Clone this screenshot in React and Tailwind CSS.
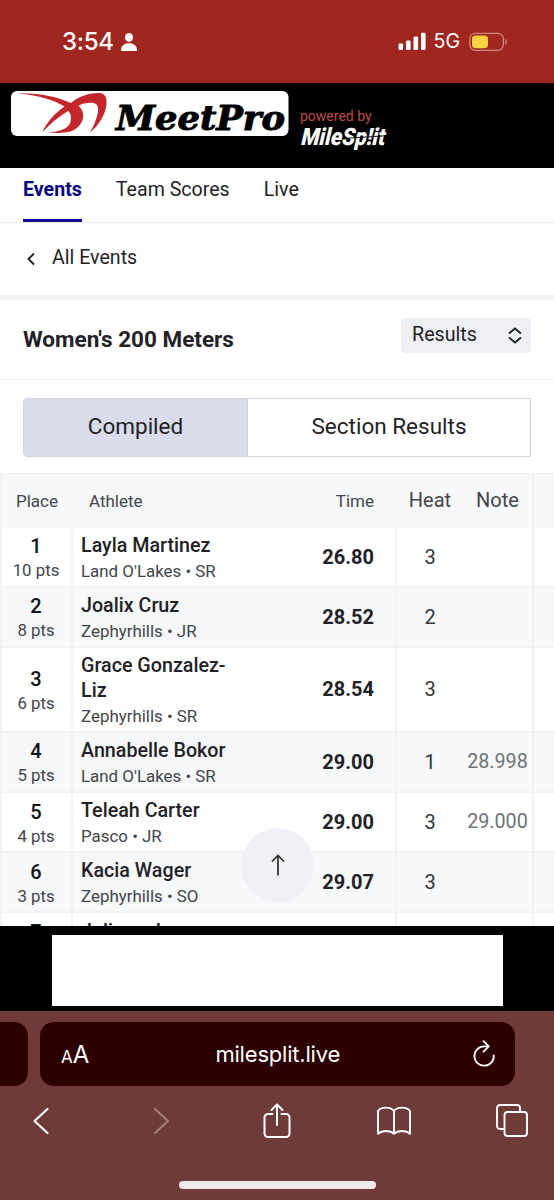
import { clsx } from 'clsx'

const TABS = ['Events', 'Team Scores', 'Live']

const RESULTS = [
  { place: 1, pts: 10, name: ['Layla Martinez'], team: "Land O'Lakes", year: 'SR', time: '26.80', heat: 3 },
  { place: 2, pts: 8, name: ['Joalix Cruz'], team: 'Zephyrhills', year: 'JR', time: '28.52', heat: 2 },
  { place: 3, pts: 6, name: ['Grace Gonzalez-', 'Liz'], team: 'Zephyrhills', year: 'SR', time: '28.54', heat: 3 },
  { place: 4, pts: 5, name: ['Annabelle Bokor'], team: "Land O'Lakes", year: 'SR', time: '29.00', heat: 1, note: '28.998' },
  { place: 5, pts: 4, name: ['Teleah Carter'], team: 'Pasco', year: 'JR', time: '29.00', heat: 3, note: '29.000' },
  { place: 6, pts: 3, name: ['Kacia Wager'], team: 'Zephyrhills', year: 'SO', time: '29.07', heat: 3 },
  { place: 7, name: ['Juliana Jones'] },
]

export default function App() {
  return (
    <div className="w-[554px] h-[1200px] overflow-hidden flex flex-col bg-white font-[Roboto,sans-serif] text-[#1f2226]">
      <StatusBar />
      <SiteHeader />
      <Tabs />

      <div className="h-[72px] shrink-0 flex items-center pl-[25px]">
        <svg width="12" height="14" viewBox="0 0 12 14" fill="none" stroke="currentColor" strokeWidth="1.9">
          <path d="M9 1.5 3.5 7 9 12.5" />
        </svg>
        <span className="ml-[15px] pb-0.5 text-[19.6px]">All Events</span>
      </div>

      <div className="h-[85px] shrink-0 border-t-[5px] border-b border-t-[#f3f3f4] border-b-[#f1f1f2] flex justify-between items-center px-[23px]">
        <h1 className="text-[22.5px] font-bold">Women's 200 Meters</h1>
        <div className="w-[130px] h-[35px] mb-2 rounded bg-[#eff0f6] flex items-center justify-between pl-[11px] pr-[9px]">
          <span className="text-[19.7px] pb-0.5">Results</span>
          <svg width="14" height="17" viewBox="0 0 14 17" fill="none" stroke="currentColor" strokeWidth="1.9">
            <path d="M1 6.5 7 1.5l6 5M1 10.5l6 5 6-5" />
          </svg>
        </div>
      </div>

      <div className="shrink-0 px-[23px] pt-[18px] pb-4">
        <div className="h-[59px] flex border border-[#d3d4dd] rounded-l text-[22.5px] overflow-hidden">
          <div className="w-[224px] bg-[#dadceb] border-r border-[#d3d4dd] flex items-center justify-center pb-0.5">Compiled</div>
          <div className="flex-1 flex items-center justify-center pb-0.5">Section Results</div>
        </div>
      </div>

      <ResultsTable />
      <AdBanner />
      <BrowserBar />
    </div>
  )
}

function StatusBar() {
  return (
    <div className="h-[83px] shrink-0 bg-[#9f271f] flex items-center justify-between pl-[62px] pr-[46px] text-white font-[Inter,sans-serif]">
      <div className="flex items-center gap-[7px]">
        <span className="text-[24px] font-medium tracking-[-0.3px] leading-none">3:54</span>
        <svg width="16" height="18" viewBox="0 0 16 18" fill="currentColor">
          <ellipse cx="8" cy="4.4" rx="4" ry="4.4" />
          <path d="M0 17C0 12.5 3.5 10.2 8 10.2s8 2.3 8 6.8c0 .6-.4 1-1 1H1c-.6 0-1-.4-1-1z" />
        </svg>
      </div>
      <div className="flex items-center">
        <svg width="28" height="19" viewBox="0 0 28 19" fill="currentColor">
          <rect x="0.5" y="11.5" width="4.6" height="6.5" rx="1.3" />
          <rect x="8" y="8.5" width="4.6" height="9.5" rx="1.3" />
          <rect x="15.5" y="4.5" width="4.6" height="13.5" rx="1.3" />
          <rect x="23" y="0.7" width="4.6" height="17.3" rx="1.3" />
        </svg>
        <span className="ml-[8px] text-[19.5px] leading-none">5G</span>
        <svg className="ml-[9px]" width="39" height="20" viewBox="0 0 39 20" fill="none">
          <rect x="0.8" y="1.3" width="33.6" height="17" rx="5.5" stroke="#cf8580" strokeWidth="1.3" />
          <rect x="3" y="3.4" width="16" height="12.8" rx="3.6" fill="#fad343" />
          <path d="M36.4 6.7c2 .9 2 5.3 0 6.2z" fill="#cf8580" />
        </svg>
      </div>
    </div>
  )
}

function SiteHeader() {
  return (
    <header className="h-[84.5px] shrink-0 bg-black flex pl-[11px] pt-2">
      <svg width="278" height="45" viewBox="0 0 278 45">
        <rect width="277.5" height="45" rx="6" fill="#fff" />
        <path fill="#c3272b" d="M6 2.2C28 1.6 46 5.5 60 12C68 5 78 2 88 2C94 2 96 6 95.5 13C94.5 24 88 34 79 41.500C84 32 87.500 24 87 17C86.500 12 82 10.500 73 12.500C70 13.200 68.500 14 67.500 15C74 20 73.500 29 68 35C62 42 52 42.500 36.500 41.500C49 40.500 57 38 59.500 31C60.500 26 60 22.500 57 20C47 26 39 33 31.500 41C35 32 44 22 53.500 15.500C45 10 30 4.500 6 2.200Z" />
        <text x="105" y="39" textLength="169" lengthAdjust="spacingAndGlyphs" fontFamily="DejaVu Serif" fontWeight="700" fontStyle="italic" fontSize="33.5" stroke="#000" strokeWidth="1">MeetPro</text>
      </svg>
      <div className="ml-[11px] pt-[17px] flex flex-col">
        <span className="text-[14px] leading-[17px] text-[#bf4b4b]">powered by</span>
        <svg width="94" height="30" viewBox="0 0 94 30" fill="#fff">
          <g transform="skewX(-13)">
            <text x="4.5" y="19.8" textLength="84" lengthAdjust="spacingAndGlyphs" fontFamily="Roboto" fontWeight="900" fontSize="24">MileSp!it</text>
          </g>
          <path d="M42 13.5 90 10.500" stroke="#000" strokeWidth="0.9" />
        </svg>
      </div>
    </header>
  )
}

function Tabs() {
  return (
    <nav className="h-[55.5px] shrink-0 border-b border-[#ececef] flex gap-[34px] pl-[23px] text-[19.6px]">
      {TABS.map((tab, i) => (
        <div
          key={tab}
          className={clsx('h-[54px] leading-[43px] border-b-[3px]', i === 0 ? 'font-bold text-[#06067f] border-[#0d0d92]' : 'border-transparent')}
        >
          {tab}
        </div>
      ))}
    </nav>
  )
}

const COLS = 'grid grid-cols-[72px_324px_66px_69px_1fr]'

function ResultsTable() {
  return (
    <div className="relative flex-1 min-h-0 overflow-hidden border-l-2 border-[#f1f2f4]">
      <div className={clsx(COLS, 'h-[54.5px] bg-[#f7f8fa] border-t border-[#f1f2f4] items-center text-[#42454b] -ml-px')}>
        <span className="text-[17px] text-center pt-px">Place</span>
        <span className="flex justify-between pl-4 pr-[23px] text-[17px] pt-px">
          <span>Athlete</span>
          <span>Time</span>
        </span>
        <span className="text-[20px] text-center pb-0.5">Heat</span>
        <span className="text-[20px] text-center pb-0.5">Note</span>
        <span className="h-full border-l-2 border-[#f1f2f4]" />
      </div>
      {RESULTS.map((r) => (
        <ResultRow key={r.place} result={r} />
      ))}

      {/* back to top */}
      <button className="absolute left-[239px] top-[355px] w-[73px] h-[74px] rounded-full bg-[#eff0f7]/95 flex items-center justify-center">
        <svg width="14" height="22" viewBox="0 0 14 22" fill="none" stroke="#2a2c31" strokeWidth="1.7">
          <path d="M7 21.5V1.5M1 7.5l6-6 6 6" />
        </svg>
      </button>
    </div>
  )
}

function ResultRow({ result: r }) {
  return (
    <div
      className={clsx(
        COLS,
        '-ml-px border-b-2 border-[#f1f2f4]',
        r.name.length > 1 ? 'h-[85px]' : 'h-[60.2px]',
        r.place % 2 === 0 ? 'bg-[#f7f8fa]' : 'bg-white'
      )}
    >
      <div className="pt-[3px] flex flex-col justify-center text-center border-r-2 border-[#f1f2f4]">
        <p className="text-[20px] leading-[25px] font-medium text-[#111317]">{r.place}</p>
        <p className="h-[23px] text-[16.8px] leading-[23px] text-[#42454b]">{r.pts && `${r.pts} pts`}</p>
      </div>
      <div className="flex justify-between items-center pl-2 pr-[21px] border-r-2 border-[#f1f2f4]">
        <div className="pt-[3px]">
          <p className="text-[19.7px] leading-[25px] font-medium">
            {r.name.map((part) => (
              <span key={part} className="block">{part}</span>
            ))}
          </p>
          <p className="h-[26px] text-[16.9px] leading-[26px] text-[#42454b]">{r.team && `${r.team} • ${r.year}`}</p>
        </div>
        <span className="text-[20px] font-bold">{r.time}</span>
      </div>
      <div className="flex items-center justify-center text-[20px] text-[#33363b]">{r.heat}</div>
      <div className="flex items-center justify-center text-[19.7px] text-[#707276]">{r.note}</div>
      <div className="border-l-2 border-[#f1f2f4]" />
    </div>
  )
}

function AdBanner() {
  return (
    <div className="h-[84.5px] shrink-0 bg-black flex justify-center pt-[9px]">
      <div className="w-[451px] h-[70.5px] bg-white" />
    </div>
  )
}

function BrowserBar() {
  return (
    <footer className="h-[189.5px] shrink-0 bg-[#6f3b39] text-white flex flex-col items-center font-[Inter,sans-serif]">
      <div className="w-full flex gap-3 pt-[11.5px]">
        <div className="w-7 h-[63.5px] rounded-r-[14px] bg-[#2d0000]" />
        <div className="w-[474.5px] h-[63.5px] rounded-[14px] bg-[#2d0000] flex items-center justify-between pl-[21px] pr-5">
          <span className="w-8 whitespace-nowrap leading-none pt-0.5">
            <span className="text-[17px]">A</span>
            <span className="text-[24px]">A</span>
          </span>
          <span className="text-[22px] tracking-[-0.2px] pt-px">milesplit.live</span>
          <span className="w-8 flex justify-end">
            <svg width="22" height="27" viewBox="0 0 22 27" fill="none" stroke="currentColor" strokeWidth="1.8" strokeLinecap="round" strokeLinejoin="round">
              <path d="M15 6.3H11A9.7 9.7 0 1 0 20.8 15.500" />
              <path d="M10.5 1.2 15.8 6.3 10.5 11.600" />
            </svg>
          </span>
        </div>
      </div>

      <div className="w-full h-[70px] flex items-center justify-between pl-[23px] pr-[24px]">
        <div className="w-9 flex justify-center">
          <svg width="18" height="28" viewBox="0 0 18 28" fill="none" stroke="currentColor" strokeWidth="2.2" strokeLinecap="round" strokeLinejoin="round">
            <path d="M15.500 2 2.500 14 15.500 26" />
          </svg>
        </div>
        <div className="w-9 flex justify-end pr-[7px]">
          <svg width="18" height="28" viewBox="0 0 18 28" fill="none" stroke="#a67f7d" strokeWidth="2" strokeLinecap="round" strokeLinejoin="round">
            <path d="M3 2 16 14 3 26" />
          </svg>
        </div>
        <div className="w-9 flex justify-center">
          <svg width="28" height="36" viewBox="0 0 28 36" fill="none" stroke="currentColor" strokeWidth="2" strokeLinecap="round" strokeLinejoin="round">
            <path d="M9.5 11H5a3.5 3.5 0 0 0-3.5 3.5v16A3.5 3.5 0 0 0 5 34h18a3.5 3.5 0 0 0 3.500-3.500v-16A3.500 3.500 0 0 0 23 11h-4.500M14 22V1.8M8.500 7 14 1.500 19.500 7" />
          </svg>
        </div>
        <div className="w-9 flex justify-center">
          <svg width="34" height="30" viewBox="0 0 34 30" fill="none" stroke="currentColor" strokeWidth="1.9" strokeLinejoin="round" strokeLinecap="round">
            <path d="M17 5C14 .7 4.500.3 1 5v22.800c4-3.800 12-3.800 16 0 4-3.800 12-3.800 16 0V5c-3.500-4.700-13-4.300-16 0zM17 5v22.800" />
          </svg>
        </div>
        <div className="w-9 flex justify-center">
          <svg width="32" height="33" viewBox="0 0 32 33" fill="none" stroke="currentColor" strokeWidth="1.9" strokeLinejoin="round">
            <path d="M8.500 25H4a3 3 0 0 1-3-3V4a3 3 0 0 1 3-3h17a3 3 0 0 1 3 3v4" />
            <rect x="8.500" y="8" width="22.500" height="24" rx="3" />
          </svg>
        </div>
      </div>

      <div className="mt-[25.5px] w-[197px] h-[7.5px] rounded-full bg-[#f3eceb]" />
    </footer>
  )
}
